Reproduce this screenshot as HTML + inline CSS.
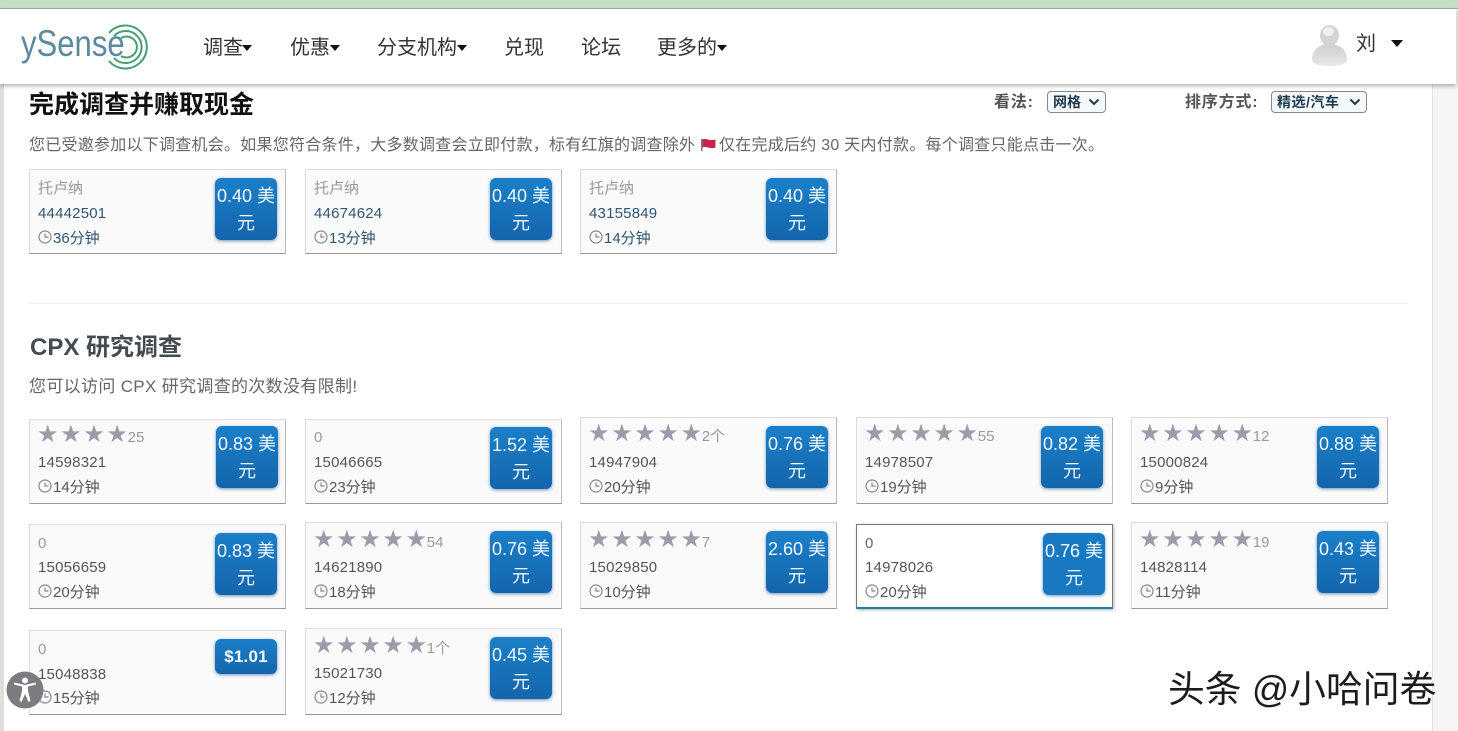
<!DOCTYPE html>
<html lang="zh">
<head>
<meta charset="utf-8">
<title>ySense</title>
<style>
html,body{margin:0;padding:0;width:1458px;height:731px;overflow:hidden;background:#fff;}
body{position:relative;font-family:"Liberation Sans","Noto Sans CJK SC",sans-serif;color:#555;}
.a{position:absolute;white-space:nowrap;line-height:1;}
#left{position:absolute;left:0;top:0;width:4px;height:731px;background:#dedede;}
#right{position:absolute;left:1432px;top:0;width:26px;height:731px;background:#f5f5f5;border-left:1px solid #e2e2e2;box-sizing:border-box;}
#top{position:absolute;left:0;top:0;width:1458px;height:9px;background:#c6e0c6;border-bottom:1px solid #9db59d;box-sizing:border-box;}
#hdr{position:absolute;left:0;top:9px;width:1456px;height:75px;background:#fff;box-shadow:0 2px 4px rgba(0,0,0,.3);}
.nav{font-size:20px;color:#333;top:38px;}
.caret{position:absolute;width:0;height:0;border-left:5.5px solid transparent;border-right:5.5px solid transparent;border-top:6px solid #111;}
.card{position:absolute;width:257px;box-sizing:border-box;background:#fafafa;border:1px solid #dcdcdc;border-right-color:#bbb;border-bottom:1px solid #999;}
.btn{position:absolute;width:62px;box-sizing:border-box;border-radius:6px;background:linear-gradient(#1a80c9,#1465ac);box-shadow:0 1px 3px rgba(20,80,140,.6);color:#f2f8fd;font-size:18px;text-align:center;line-height:27px;padding-top:5px;}
.n{position:absolute;left:8px;font-size:15px;line-height:1;color:#999;white-space:nowrap;transform:translateY(1px);}
.id{position:absolute;left:8px;font-size:15px;line-height:1;color:#555;letter-spacing:.2px;transform:translateY(1px);}
.t{position:absolute;left:8px;font-size:15px;line-height:1;color:#555;white-space:nowrap;transform:translateY(1px);}
.t svg{position:absolute;left:0;top:-1px;}
.t span{margin-left:15px;}
.blue{color:#2f5573;}
.s{color:#9b9ca9;font-size:24px;line-height:0;letter-spacing:1.6px;font-family:"DejaVu Sans",sans-serif;margin-right:-6px;margin-left:-1px;position:relative;top:0;}
.sel{position:absolute;top:91px;height:22px;box-sizing:border-box;border:1px solid #888;border-radius:4px;background:#f6f9fc;color:#1f3b52;font-size:14px;font-weight:bold;line-height:20px;padding-left:5px;}
.sel svg{position:absolute;right:5px;top:6px;}
.lab{top:95px;font-size:16px;font-weight:bold;color:#555;letter-spacing:.8px;}
</style>
</head>
<body>
<div id="left"></div>
<div id="right"></div>
<div id="top"></div>
<div id="hdr"></div>

<div class="a" style="left:21px;top:25px;font-size:37px;color:#5b8a9f;transform:scaleX(.84);transform-origin:0 0;">ySense</div>
<svg class="a" style="left:102px;top:23px;" width="50" height="48" viewBox="0 0 50 48" fill="none" stroke="#46a072">
<path d="M7 10A21.500 21.500 0 1 1 7 38" stroke-width="2"/>
<path d="M12 13A16 16 0 1 1 12 35" stroke-width="2"/>
<path d="M19 15A10.500 10.500 0 1 1 19 33" stroke-width="2"/>
</svg>

<div class="a nav" style="left:203px;">调查</div><div class="caret" style="left:242px;top:45px;"></div>
<div class="a nav" style="left:290px;">优惠</div><div class="caret" style="left:330px;top:45px;"></div>
<div class="a nav" style="left:377px;">分支机构</div><div class="caret" style="left:457px;top:45px;"></div>
<div class="a nav" style="left:504px;">兑现</div>
<div class="a nav" style="left:581px;">论坛</div>
<div class="a nav" style="left:657px;">更多的</div><div class="caret" style="left:717px;top:45px;"></div>

<svg class="a" style="left:1311px;top:24px;" width="37" height="43" viewBox="0 0 37 43">
<defs><linearGradient id="u" x1="0" y1="0" x2="0" y2="1"><stop offset="0" stop-color="#cfcfcf"/><stop offset="1" stop-color="#e8e8e8"/></linearGradient></defs>
<path d="M1 36C1 26 8 20 18.500 20S36 26 36 36C36 40 28 42 18.500 42S1 40 1 36Z" fill="url(#u)"/>
<ellipse cx="18.500" cy="11.500" rx="9.500" ry="10.500" fill="#d4d4d4"/>
<ellipse cx="17.500" cy="7.500" rx="5.500" ry="4.500" fill="#f0f0f0"/>
</svg>
<div class="a" style="left:1356px;top:34px;font-size:20px;color:#333;">刘</div>
<div class="caret" style="left:1391px;top:40px;border-left-width:6px;border-right-width:6px;border-top-width:7px;"></div>

<div class="a" style="left:29px;top:93px;font-size:25px;font-weight:bold;color:#111;">完成调查并赚取现金</div>
<div class="a lab" style="left:994px;">看法:</div>
<div class="sel" style="left:1047px;width:59px;">网格<svg width="12" height="8" viewBox="0 0 12 8" fill="none" stroke="#1f3b52" stroke-width="2"><path d="M1.500 1.500L6 6L10.500 1.500"/></svg></div>
<div class="a lab" style="left:1185px;">排序方式:</div>
<div class="sel" style="left:1271px;width:96px;letter-spacing:.5px;">精选/汽车<svg width="12" height="8" viewBox="0 0 12 8" fill="none" stroke="#1f3b52" stroke-width="2"><path d="M1.500 1.500L6 6L10.500 1.500"/></svg></div>

<div class="a" style="left:29px;top:138px;font-size:16px;color:#666;letter-spacing:.25px;">您已受邀参加以下调查机会。如果您符合条件，大多数调查会立即付款，标有红旗的调查除外</div>
<svg class="a" style="left:700px;top:138px;" width="16" height="14" viewBox="0 0 16 14"><rect x="1" y="1" width="1.500" height="12" fill="#777"/><path d="M2.500 1.500C6 -.5 9 3.500 15.500 1.500V9.500C9 11.500 6 7.500 2.500 9.500Z" fill="#c8234a"/></svg>
<div class="a" style="left:719px;top:138px;font-size:16px;color:#666;letter-spacing:.25px;">仅在完成后约 30 天内付款。每个调查只能点击一次。</div>

<div class="card" style="left:29px;top:169px;height:85px;"><div class="n" style="top:10px;">托卢纳</div><div class="id blue" style="top:35px;">44442501</div><div class="t blue" style="top:60px;"><svg width="14" height="14" viewBox="0 0 14 14" fill="none" stroke="#888" stroke-width="1.200"><circle cx="7" cy="7" r="6"/><path d="M7 3.500V7H10.500"/></svg><span>36分钟</span></div><div class="btn" style="left:185px;top:8px;height:62px;">0.40 美<br>元</div></div>
<div class="card" style="left:305px;top:169px;height:85px;"><div class="n" style="top:10px;">托卢纳</div><div class="id blue" style="top:35px;">44674624</div><div class="t blue" style="top:60px;"><svg width="14" height="14" viewBox="0 0 14 14" fill="none" stroke="#888" stroke-width="1.200"><circle cx="7" cy="7" r="6"/><path d="M7 3.500V7H10.500"/></svg><span>13分钟</span></div><div class="btn" style="left:184px;top:8px;height:62px;">0.40 美<br>元</div></div>
<div class="card" style="left:580px;top:169px;height:85px;"><div class="n" style="top:10px;">托卢纳</div><div class="id blue" style="top:35px;">43155849</div><div class="t blue" style="top:60px;"><svg width="14" height="14" viewBox="0 0 14 14" fill="none" stroke="#888" stroke-width="1.200"><circle cx="7" cy="7" r="6"/><path d="M7 3.500V7H10.500"/></svg><span>14分钟</span></div><div class="btn" style="left:185px;top:8px;height:62px;">0.40 美<br>元</div></div>

<div class="a" style="left:29px;top:303px;width:1379px;height:1px;background:#eee;"></div>

<div class="a" style="left:30px;top:336px;font-size:24px;font-weight:bold;color:#444b50;">CPX 研究调查</div>
<div class="a" style="left:29px;top:378px;font-size:17px;color:#666;letter-spacing:.33px;">您可以访问 CPX 研究调查的次数没有限制!</div>

<div class="card" style="left:29px;top:419px;height:85px;"><div class="n" style="top:9px;"><span class="s">★★★★</span> 25</div><div class="id" style="top:34px;">14598321</div><div class="t" style="top:59px;"><svg width="14" height="14" viewBox="0 0 14 14" fill="none" stroke="#888" stroke-width="1.200"><circle cx="7" cy="7" r="6"/><path d="M7 3.500V7H10.500"/></svg><span>14分钟</span></div><div class="btn" style="left:186px;top:6px;height:62px;">0.83 美<br>元</div></div>
<div class="card" style="left:305px;top:419px;height:85px;"><div class="n" style="top:9px;">0</div><div class="id" style="top:34px;">15046665</div><div class="t" style="top:59px;"><svg width="14" height="14" viewBox="0 0 14 14" fill="none" stroke="#888" stroke-width="1.200"><circle cx="7" cy="7" r="6"/><path d="M7 3.500V7H10.500"/></svg><span>23分钟</span></div><div class="btn" style="left:184px;top:7px;height:62px;">1.52 美<br>元</div></div>
<div class="card" style="left:580px;top:417px;height:87px;"><div class="n" style="top:10px;"><span class="s">★★★★★</span> 2个</div><div class="id" style="top:36px;">14947904</div><div class="t" style="top:61px;"><svg width="14" height="14" viewBox="0 0 14 14" fill="none" stroke="#888" stroke-width="1.200"><circle cx="7" cy="7" r="6"/><path d="M7 3.500V7H10.500"/></svg><span>20分钟</span></div><div class="btn" style="left:185px;top:8px;height:62px;">0.76 美<br>元</div></div>
<div class="card" style="left:856px;top:417px;height:87px;"><div class="n" style="top:10px;"><span class="s">★★★★★</span> 55</div><div class="id" style="top:36px;">14978507</div><div class="t" style="top:61px;"><svg width="14" height="14" viewBox="0 0 14 14" fill="none" stroke="#888" stroke-width="1.200"><circle cx="7" cy="7" r="6"/><path d="M7 3.500V7H10.500"/></svg><span>19分钟</span></div><div class="btn" style="left:184px;top:8px;height:62px;">0.82 美<br>元</div></div>
<div class="card" style="left:1131px;top:417px;height:87px;"><div class="n" style="top:10px;"><span class="s">★★★★★</span> 12</div><div class="id" style="top:36px;">15000824</div><div class="t" style="top:61px;"><svg width="14" height="14" viewBox="0 0 14 14" fill="none" stroke="#888" stroke-width="1.200"><circle cx="7" cy="7" r="6"/><path d="M7 3.500V7H10.500"/></svg><span>9分钟</span></div><div class="btn" style="left:185px;top:8px;height:62px;">0.88 美<br>元</div></div>

<div class="card" style="left:29px;top:524px;height:85px;"><div class="n" style="top:10px;">0</div><div class="id" style="top:34px;">15056659</div><div class="t" style="top:59px;"><svg width="14" height="14" viewBox="0 0 14 14" fill="none" stroke="#888" stroke-width="1.200"><circle cx="7" cy="7" r="6"/><path d="M7 3.500V7H10.500"/></svg><span>20分钟</span></div><div class="btn" style="left:185px;top:8px;height:62px;">0.83 美<br>元</div></div>
<div class="card" style="left:305px;top:522px;height:87px;"><div class="n" style="top:11px;"><span class="s">★★★★★</span> 54</div><div class="id" style="top:36px;">14621890</div><div class="t" style="top:61px;"><svg width="14" height="14" viewBox="0 0 14 14" fill="none" stroke="#888" stroke-width="1.200"><circle cx="7" cy="7" r="6"/><path d="M7 3.500V7H10.500"/></svg><span>18分钟</span></div><div class="btn" style="left:184px;top:8px;height:62px;">0.76 美<br>元</div></div>
<div class="card" style="left:580px;top:522px;height:87px;"><div class="n" style="top:11px;"><span class="s">★★★★★</span> 7</div><div class="id" style="top:36px;">15029850</div><div class="t" style="top:61px;"><svg width="14" height="14" viewBox="0 0 14 14" fill="none" stroke="#888" stroke-width="1.200"><circle cx="7" cy="7" r="6"/><path d="M7 3.500V7H10.500"/></svg><span>10分钟</span></div><div class="btn" style="left:185px;top:8px;height:62px;">2.60 美<br>元</div></div>
<div class="card" style="left:856px;top:524px;height:85px;background:#fff;border:1px solid #777;border-bottom:2px solid #1f7fa8;box-shadow:1px 1px 3px rgba(0,0,0,.3);"><div class="n" style="top:10px;color:#666;">0</div><div class="id" style="top:34px;">14978026</div><div class="t" style="top:59px;"><svg width="14" height="14" viewBox="0 0 14 14" fill="none" stroke="#888" stroke-width="1.200"><circle cx="7" cy="7" r="6"/><path d="M7 3.500V7H10.500"/></svg><span>20分钟</span></div><div class="btn" style="left:186px;top:8px;height:62px;background:#1878c2;">0.76 美<br>元</div></div>
<div class="card" style="left:1131px;top:522px;height:87px;"><div class="n" style="top:11px;"><span class="s">★★★★★</span> 19</div><div class="id" style="top:36px;">14828114</div><div class="t" style="top:61px;"><svg width="14" height="14" viewBox="0 0 14 14" fill="none" stroke="#888" stroke-width="1.200"><circle cx="7" cy="7" r="6"/><path d="M7 3.500V7H10.500"/></svg><span>11分钟</span></div><div class="btn" style="left:185px;top:8px;height:62px;">0.43 美<br>元</div></div>

<div class="card" style="left:29px;top:630px;height:85px;"><div class="n" style="top:10px;">0</div><div class="id" style="top:35px;">15048838</div><div class="t" style="top:59px;"><svg width="14" height="14" viewBox="0 0 14 14" fill="none" stroke="#888" stroke-width="1.200"><circle cx="7" cy="7" r="6"/><path d="M7 3.500V7H10.500"/></svg><span>15分钟</span></div><div class="btn" style="left:185px;top:8px;height:35px;padding-top:4px;font-weight:bold;font-size:17px;letter-spacing:.2px;">$1.01</div></div>
<div class="card" style="left:305px;top:628px;height:87px;"><div class="n" style="top:11px;"><span class="s">★★★★★</span> 1个</div><div class="id" style="top:36px;">15021730</div><div class="t" style="top:61px;"><svg width="14" height="14" viewBox="0 0 14 14" fill="none" stroke="#888" stroke-width="1.200"><circle cx="7" cy="7" r="6"/><path d="M7 3.500V7H10.500"/></svg><span>12分钟</span></div><div class="btn" style="left:184px;top:8px;height:62px;">0.45 美<br>元</div></div>

<svg class="a" style="left:6px;top:671px;" width="38" height="38" viewBox="0 0 38 38">
<circle cx="19" cy="19" r="18.500" fill="#7c7c80"/>
<circle cx="19" cy="9.500" r="3" fill="#fff"/>
<path d="M8 13.500L16 15.500V20L13.500 30L15.500 31L19 23L22.500 31L24.500 30L22 20V15.500L30 13.500L29.500 11.500L19 14L8.500 11.500Z" fill="#fff"/>
</svg>

<div class="a" style="left:1168px;top:672px;font-size:36.800px;color:#1c1c1c;text-shadow:1px 1px 0 rgba(255,255,255,.8);">头条 @小哈问卷</div>
</body>
</html>
